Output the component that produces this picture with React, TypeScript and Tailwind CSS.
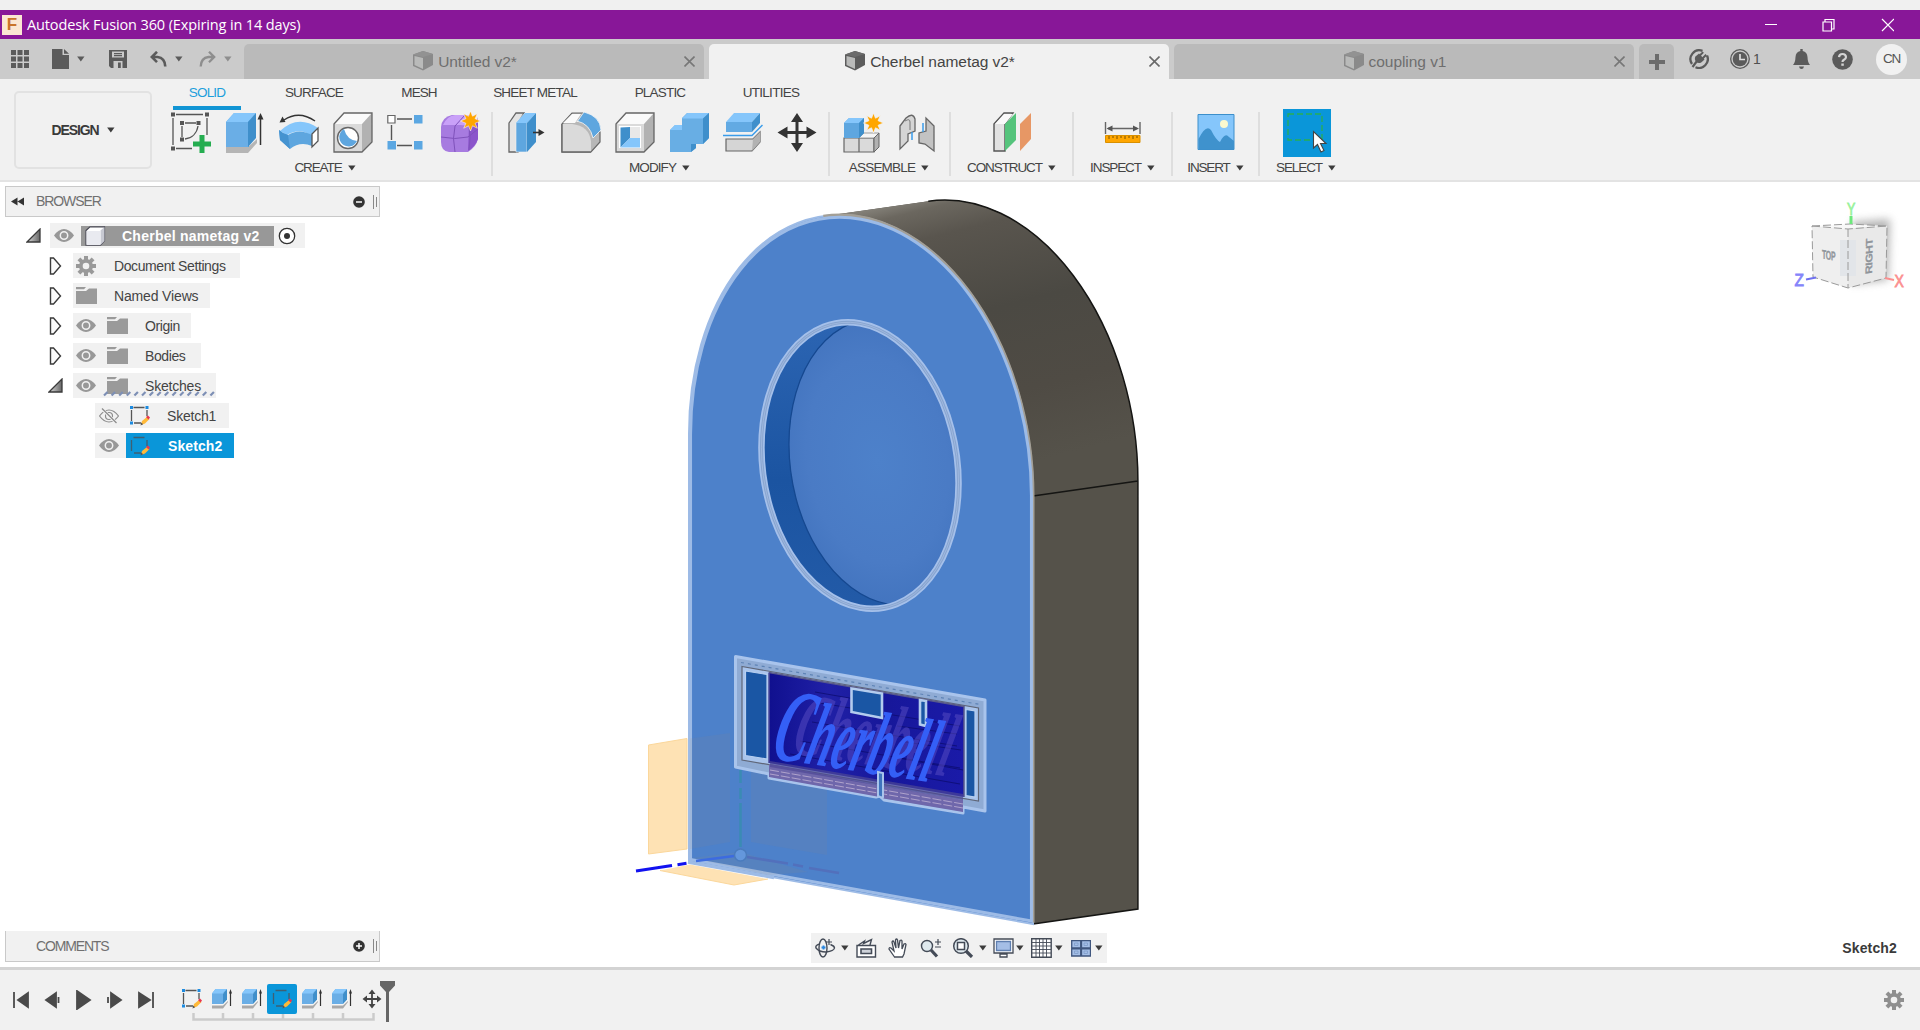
import type { ReactNode } from "react";

const Caret = ({ className = "text-[#3c3c3c]" }: { className?: string }) => (
  <svg className={"shrink-0 " + className} width="8" height="6" viewBox="0 0 9 7">
    <path d="M0 .5h8.6L4.3 6.500z" fill="currentColor" />
  </svg>
);

const Icon = ({ children }: { children: ReactNode }) => (
  <svg className="block shrink-0" width="40" height="42" viewBox="0 0 40 42">
    {children}
  </svg>
);

const star =
  "M0-10 2-4.8 6.8-7.2 4.6-2.3 10 0 4.6 2.3 6.8 7.2 2 4.8 0 10-2 4.8-6.8 7.2-4.6 2.3-10 0-4.6-2.3-6.8-7.2-2-4.8z";

/* ---------- create tools ---------- */
const SketchIcon = () => (
  <Icon>
    <g stroke="#555" strokeWidth="1.3" fill="none">
      <path d="M5 2.500h27M2 6v27M36 6v17M5 36.500h16" />
      <path d="M14 11h11M11 14v11M27 14c-1 7-6 12-13 13" />
    </g>
    <path
      d="M0 .5h4v4H0zM34 .5h4v4h-4zM0 34.500h4v4H0zM9 9h4v4H9zM25.500 9h4v4h-4zM9 25.500h4v4H9z"
      fill="#555"
    />
    <path d="M28.500 23h5v6.500H40v5h-6.500V41h-5v-6.500H22v-5h6.500z" fill="#25ad50" />
  </Icon>
);
const ExtrudeIcon = () => (
  <Icon>
    <path d="M1 35h22l9-8v4l-9 10H1z" fill="#b5b5b5" />
    <path d="M1 10 9 1h22l-7 9v25H1z" fill="#6aaee6" />
    <path d="M1 10 9 1h22l-8 9z" fill="#85c6fb" />
    <path d="m23 10 8-9v25l-8 9z" fill="#3f8fcb" />
    <path d="M35.500 4v29" stroke="#333" strokeWidth="1.5" />
    <path d="m35.500 1 3 6.500h-6z" fill="#333" />
  </Icon>
);
const RevolveIcon = () => (
  <Icon>
    <path d="M1 19q18-17 38-3l-6 8q-12-9-25-1z" fill="#85c6fb" />
    <path d="M0 18q4 4 9 5 11-7 24 0v11q-12-5-22 3L1 28z" fill="#5ea6df" />
    <path d="M0 18q4 4 9 5l2 14L1 28z" fill="#4593d0" />
    <path d="m33 22 6-6v13l-6 6z" fill="#fff" stroke="#555" strokeWidth="1.3" />
    <path d="M5 8Q20-2 36 9" fill="none" stroke="#333" strokeWidth="1.5" />
    <path d="m.5 10.500 3-6 3 5.500z" fill="#333" />
  </Icon>
);
const HoleIcon = () => (
  <Icon>
    <path d="M1 12 11 1h28L29 12z" fill="#fafafa" />
    <path d="M1 12h28v28H1z" fill="#dadada" />
    <path d="M29 12 39 1v29L29 40z" fill="#b2b2b2" />
    <path d="M1 12 11 1h28v29L29 40H1z" fill="none" stroke="#666" strokeWidth="1.3" />
    <circle cx="15" cy="26" r="10.500" fill="#fff" stroke="#666" strokeWidth="1.4" />
    <path d="M11 17q3 11 13 12a9.300 9.300 0 1 1-13-12z" fill="#5ea6df" />
  </Icon>
);
const PatternIcon = () => (
  <Icon>
    <path d="M10 7h15M4.500 13v15M10 33.500h15" stroke="#555" strokeWidth="1.4" />
    <path d="M.8 3.500H8v7.500H.8z" fill="#fff" stroke="#666" strokeWidth="1.2" />
    <path d="M27 3h8.500v8.500H27zM27 29h8.500v8.500H27zM.5 29H9v8.500H.5z" fill="#5ba7e2" />
  </Icon>
);
const FormIcon = () => (
  <Icon>
    <path d="M0 15Q1 5 11 3h15q11 2 11 12v12q-2 8-10 13H8q-8-1-8-10z" fill="#a77be0" />
    <path d="M2 13Q6 4 14 3h14q6 3 0 8-3 3-8 2z" fill="#c9a1f8" />
    <path d="M28 13q9-3 9-8v22q-3 8-10 12z" fill="#8b55cb" />
    <path d="M0 25q14 3 27 0l10-8M14 40q-3-14 0-26l10-11M28 38q2-12 0-25" fill="none" stroke="#7f52bb" strokeWidth="1" />
    <path transform="translate(29.500 9)" d={star} fill="#ffa600" stroke="#f6f0ff" strokeWidth=".6" />
  </Icon>
);

/* ---------- modify tools ---------- */
const PressPullIcon = () => (
  <Icon>
    <path d="M2 11 9 1h8L11 11v29H2z" fill="#e4e4e4" stroke="#666" strokeWidth="1.3" />
    <path d="m9 11 9-10h10l-8 10v29H9z" fill="#5ea6df" stroke="#f1f1f1" strokeWidth=".6" />
    <path d="m9 11 9-10h11l-9 10z" fill="#85c6fb" />
    <path d="m20 11 9-10v29l-9 10z" fill="#3f8fcb" />
    <path d="M26 20.500h8" stroke="#333" strokeWidth="1.6" />
    <path d="m31.500 17 6 3.500-6 3.500z" fill="#333" />
  </Icon>
);
const FilletIcon = () => (
  <Icon>
    <path d="M1 12 11 1h11l17 19v10L30 40H1z" fill="#b7b7b7" stroke="#666" strokeWidth="1.2" />
    <path d="M1 12h10q17 2 19 17v11H1z" fill="#dadada" />
    <path d="M2 11 11 2h9l-6 9z" fill="#fafafa" />
    <path d="m16 10 7-10q16 4 17 18l-8 8Q29 12 16 9z" fill="#5ea6df" stroke="#f6f6f6" strokeWidth=".8" />
    <path d="M1 12v28h29" fill="none" stroke="#666" strokeWidth="1.4" />
  </Icon>
);
const ShellIcon = () => (
  <Icon>
    <path d="M1 12 11 1h28L29 12z" fill="#fafafa" />
    <path d="M1 12h28v28H1z" fill="#dadada" />
    <path d="M29 12 39 1v29L29 40z" fill="#b2b2b2" />
    <path d="M1 12 11 1h28v29L29 40H1z" fill="none" stroke="#666" strokeWidth="1.3" />
    <path d="M4 14h22v22H4z" fill="#fff" />
    <path d="M5.500 15.500 15 15v11l-9.500 9.500z" fill="#3f8fcb" />
    <path d="M15 15h10v11H15z" fill="#e8e8e8" />
    <path d="m5.500 35.500 9.500-9.500h10v9.500z" fill="#85c6fb" />
  </Icon>
);
const CombineIcon = () => (
  <Icon>
    <path d="M1 18 6 13h7V6l5-5h22v25l-6 6h-7v4l-5 4H1z" fill="#68aee4" />
    <path d="M13 6.500 18.500 1H40l-6 5.500z" fill="#85c6fb" />
    <path d="M34 6.500 40 1v25l-6 6zM22 40V32l5 0v4z" fill="#3f8fcb" />
    <path d="M1 18 6 13h7v5z" fill="#85c6fb" />
  </Icon>
);
const SplitIcon = () => (
  <Icon>
    <path d="M3 10 11 1h26l-8 9z" fill="#85c6fb" />
    <path d="M3 10h26v10H3z" fill="#62aae3" />
    <path d="m29 10 8-9v10l-8 9z" fill="#3f8fcb" />
    <path d="M0 23.500h29L39.500 13" fill="none" stroke="#3a9cea" strokeWidth="1.5" />
    <path d="M3 27h27l7-7v10l-8 9H3z" fill="#d5d5d5" stroke="#666" strokeWidth="1.2" />
    <path d="m30 27 7-7v10l-8 9z" fill="#b2b2b2" />
  </Icon>
);
const MoveIcon = () => (
  <Icon>
    <path d="M20 7v28M6 20.500h28" stroke="#333" strokeWidth="3" />
    <path d="m20 1 6 9H14zM20 40l6-9H14zM.5 20.500l10-6v12zM39.500 20.500l-10-6v12z" fill="#333" />
  </Icon>
);

/* ---------- remaining ribbon tools ---------- */
const NewComponentIcon = () => (
  <Icon>
    <path d="M1 26h15v14H1zM16 26h15v14H16z" fill="#dadada" stroke="#666" strokeWidth="1.2" />
    <path d="m16 26 5-5h15l-5 5z" fill="#f5f5f5" stroke="#888" strokeWidth=".8" />
    <path d="m31 26 5-5v14l-5 5z" fill="#b2b2b2" stroke="#666" strokeWidth="1" />
    <path d="M1 11 6 6h15v15l-5 5H1z" fill="#5ea6df" />
    <path d="M1 11 6 6h15l-5 5z" fill="#85c6fb" />
    <path d="m16 11 5-5v15l-5 5z" fill="#3f8fcb" />
    <path transform="translate(30.500 11)" d={star} fill="#ffa600" stroke="#f1f1f1" strokeWidth=".8" />
  </Icon>
);
const JointIcon = () => (
  <Icon>
    <path d="M3 14 9 6q7-6 9 1v12l-7 3v7l-8 8z" fill="#d5d5d5" stroke="#666" strokeWidth="1.3" />
    <path d="M37 14 29 6v13l-7 2v10l6 1 9 7z" fill="#c3c3c3" stroke="#666" strokeWidth="1.3" />
    <path d="M15 20v8M26 11v9" stroke="#3a9cea" strokeWidth="1.5" />
    <path d="M8 9q5-3 5 1M13 10v8" fill="none" stroke="#777" />
  </Icon>
);
const ConstructIcon = () => (
  <Icon>
    <path d="M2 12 12 1h9l-8 11v27H2z" fill="#e2e2e2" stroke="#555" strokeWidth="1.4" />
    <path d="M3 12 12 2h9l-8 10z" fill="#fafafa" />
    <path d="M13 12 24 1v27L13 39z" fill="#55c47c" />
    <path d="M28 12 39 1v26L28 39z" fill="#e79765" />
  </Icon>
);
const InspectIcon = () => (
  <Icon>
    <path d="M2.500 10v12M37 10v12M5 16.500h29" stroke="#666" strokeWidth="1.4" />
    <path d="m3.500 16.500 6-3v6zM36 16.500l-6-3v6z" fill="#555" />
    <path d="M2.500 23.500h34.500v7H2.500z" fill="#ffa600" stroke="#d99000" />
    <path d="M6 24v3M10 24v2M14 24v3M18 24v2M22 24v3M26 24v2M30 24v3M34 24v2" stroke="#7a5300" />
  </Icon>
);
const InsertIcon = () => (
  <Icon>
    <path d="M2 2.500h36v35H2z" fill="#85c6fb" stroke="#3c8fcb" />
    <path d="M2.500 27Q10 12 15 18q5 10 9 12 5-10 9-5l5 4v8.500H2.500z" fill="#3f92cd" />
    <circle cx="28" cy="12" r="4" fill="#fbf9cf" />
  </Icon>
);
const SelectIcon = () => (
  <svg className="-mt-[3px] block shrink-0 bg-[#0a96d9]" width="48" height="48" viewBox="0 0 48 48">
    <path d="M5 5h34v26H5z" fill="none" stroke="#2aae52" strokeWidth="1.3" strokeDasharray="6 3" />
    <path d="M30.500 22.500v16.500l4-3.500 3.500 7.500 3-1.500-3.500-7h5.500z" fill="#fff" stroke="#444" strokeWidth="1.1" />
  </svg>
);

type Group = { label: string; box: string; track: string; icons: ReactNode[]; pad?: string };
const groups: Group[] = [
  {
    label: "CREATE",
    box: "w-[334px]",
    track: "tracking-[-1.1px]",
    icons: [<SketchIcon />, <ExtrudeIcon />, <RevolveIcon />, <HoleIcon />, <PatternIcon />, <FormIcon />],
  },
  {
    label: "MODIFY",
    box: "w-[337px]",
    track: "tracking-[-0.9px]",
    pad: "pr-[2px]",
    icons: [<PressPullIcon />, <FilletIcon />, <ShellIcon />, <CombineIcon />, <SplitIcon />, <MoveIcon />],
  },
  { label: "ASSEMBLE", box: "w-[121px]", track: "tracking-[-0.8px]", pad: "pr-[1px]", icons: [<NewComponentIcon />, <JointIcon />] },
  { label: "CONSTRUCT", box: "w-[123px]", track: "tracking-[-1.1px]", icons: [<ConstructIcon />] },
  { label: "INSPECT", box: "w-[99px]", track: "tracking-[-1.1px]", icons: [<InspectIcon />] },
  { label: "INSERT", box: "w-[87px]", track: "tracking-[-1.15px]", icons: [<InsertIcon />] },
  { label: "SELECT", box: "w-[92px]", track: "tracking-[-1.1px]", icons: [<SelectIcon />] },
];

const ribbonTabs = [
  ["SOLID", "w-[68px] tracking-[-0.8px]"],
  ["SURFACE", "w-[90px] tracking-[-0.8px]"],
  ["MESH", "w-[64px] tracking-[-0.9px]"],
  ["SHEET METAL", "w-[112px] tracking-[-0.8px]"],
  ["PLASTIC", "w-[82px] tracking-[-0.8px]"],
  ["UTILITIES", "w-[84px] tracking-[-0.7px]"],
];

const DocCube = ({ dim }: { dim?: boolean }) => (
  <svg className={dim ? "opacity-50" : ""} width="20" height="20" viewBox="0 0 20 20">
    <path d="M0 3.500 10 0l10 3v11l-10 5.500L0 15z" fill="#5c5c5c" />
    <path d="M1.500 5 10 7v11L1.500 14z" fill="#b9bab9" />
    <path d="M0 3.500 10 0l10 3-10 3z" fill="#6b6b6b" />
  </svg>
);

const DocTab = ({ title, active }: { title: string; active?: boolean }) => (
  <div
    className={
      "flex h-[35px] w-[460px] items-center rounded-t-[5px] text-[15.500px] " +
      (active ? "bg-[#f1f1f1] text-[#444]" : "bg-[#bababa] text-[#6e6e6e]")
    }
  >
    <div className="flex flex-1 items-center justify-center gap-[5px] pb-px pl-[2px]">
      <DocCube dim={!active} />
      <span className="pt-[2px] tracking-[-0.05px]">{title}</span>
    </div>
    <svg className="mr-[9px]" width="11" height="11" viewBox="0 0 11 11">
      <path d="m.5.5 10 10M10.500.5l-10 10" stroke={active ? "#6a6a6a" : "#777"} strokeWidth="1.6" />
    </svg>
  </div>
);

/* ---------- browser tree ---------- */
const Eye = () => (
  <svg className="block shrink-0" width="20" height="13" viewBox="0 0 20 13">
    <path d="M0 6.500Q4.500 0 10 0t10 6.500Q15.500 13 10 13T0 6.500z" fill="#989898" />
    <circle cx="10" cy="6.500" r="3.700" fill="none" stroke="#f1f1f1" strokeWidth="1.5" />
  </svg>
);
const EyeOff = () => (
  <svg className="block shrink-0" width="20" height="16" viewBox="0 0 20 16">
    <g fill="none" stroke="#8c8c8c" strokeWidth="1.2">
      <path d="M.5 8Q5 2 10 2t9.500 6Q15 14 10 14T.5 8z" />
      <circle cx="10" cy="8" r="3.500" />
      <path d="m3 1 14.500 14" stroke="#f1f1f1" strokeWidth="3" />
      <path d="m3 .5 14.500 14.500" />
    </g>
  </svg>
);
const Folder = () => (
  <svg className="block shrink-0" width="21" height="17" viewBox="0 0 21 17">
    <path d="M0 0h10l-2 2.200H0zM0 4h10l3-2.500h8V17H0z" fill="#9a9a9a" />
  </svg>
);
const Gear = ({ color = "#999" }: { color?: string }) => (
  <svg className="block shrink-0" width="20" height="20" viewBox="-10 -10 20 20">
    <g fill={color}>
      {[0, 45, 90, 135].map((a) => (
        <rect key={a} x="-2" y="-10" width="4" height="20" transform={`rotate(${a})`} />
      ))}
      <circle r="7" />
    </g>
    <circle r="3.300" fill="#f1f1f1" />
  </svg>
);
const SketchSmall = ({ on }: { on?: boolean }) => (
  <svg className="block shrink-0" width="20" height="20" viewBox="0 0 20 20">
    <path d="M3.500 1.500h11M1.500 4v11M17 4v6M4 17h7" stroke={on ? "#3f5f72" : "#555"} strokeWidth="1.300" />
    {!on && <path d="M0 0h3v3H0zM15.500 0h3v3h-3zM0 15.500h3v3H0z" fill="#1d8be0" />}
    <path d="m11 19 1-4 5-4 2.500 2-4.500 4.500z" fill="#ffb938" />
    <path d="m16 11 2-1.500 2 2-1.500 2z" fill="#e8384f" />
    <path d="m10.500 19.500.7-3 2 1.800z" fill="#555" />
  </svg>
);
const TriClosed = () => (
  <svg className="block shrink-0" width="13" height="18" viewBox="0 0 13 18">
    <path d="M1.500 1h3l7 8-7 8h-3z" fill="#fafafa" stroke="#3a3a3a" strokeWidth="1.400" />
  </svg>
);
const TriOpen = ({ className = "" }: { className?: string }) => (
  <svg className={"block shrink-0 " + className} width="15" height="15" viewBox="0 0 15 15">
    <defs>
      <linearGradient id="tri" x1="0" x2="1">
        <stop offset="0" stopColor="#ddd" />
        <stop offset="1" stopColor="#666" />
      </linearGradient>
    </defs>
    <path d="M14 1v13H1z" fill="url(#tri)" stroke="#3a3a3a" strokeWidth="1.300" />
  </svg>
);

const Row = ({ open, box, children }: { open?: boolean; box: string; children: ReactNode }) => (
  <div className="flex h-[25px] items-center pl-[49px]">
    <div className="w-[24px]">{open ? <TriOpen className="-ml-[1px]" /> : <TriClosed />}</div>
    <div className={"flex h-[25px] items-center gap-[11px] bg-[#f1f1f1] pl-[3px] " + box}>{children}</div>
  </div>
);

const PanelBar = ({ title, plus }: { title: string; plus?: boolean }) => (
  <div
    className={
      "ml-[5px] flex h-[31px] w-[375px] items-center border border-[#c9c9c9] bg-[#f1f1f1] pr-[2px] " +
      (plus ? "border-t-0" : "")
    }
  >
    <div className="w-[30px] pl-[5px]">
      {!plus && (
        <svg width="14" height="9" viewBox="0 0 14 9">
          <path d="M6.500.500v8L0 4.500zM13 .500v8L6.500 4.500z" fill="#333" />
        </svg>
      )}
    </div>
    <span className={"flex-1 text-[14px] text-[#707070] " + (plus ? "tracking-[-1.15px]" : "tracking-[-1.1px]")}>{title}</span>
    <svg width="12" height="12" viewBox="0 0 12 12">
      <circle cx="6" cy="6" r="5.800" fill="#333" />
      <path d={plus ? "M3 6h6M6 3v6" : "M3 6h6"} stroke="#fff" strokeWidth="1.500" />
    </svg>
    <div className="ml-[8px] h-[14px] w-px bg-[#888]" />
    <div className="ml-[2px] h-[10px] w-px bg-[#888]" />
  </div>
);

/* ---------- 3D scene ---------- */
const Scene = () => (
  <svg className="absolute inset-0" width="1920" height="785" viewBox="0 182 1920 785">
    <defs>
      <linearGradient id="side" gradientUnits="userSpaceOnUse" x1="890" y1="200" x2="960" y2="480">
        <stop offset="0" stopColor="#8b8880" />
        <stop offset=".06" stopColor="#6b675f" />
        <stop offset=".16" stopColor="#59554e" />
        <stop offset=".45" stopColor="#4b4943" />
        <stop offset=".75" stopColor="#4f4b44" />
        <stop offset="1" stopColor="#55524a" />
      </linearGradient>
      <radialGradient id="floor" cx=".45" cy=".5" r=".6">
        <stop offset="0" stopColor="#4d81ca" />
        <stop offset=".6" stopColor="#4a7bc5" />
        <stop offset="1" stopColor="#3e70bb" />
      </radialGradient>
      <linearGradient id="wall" x1="0" y1="0" x2="0" y2="1">
        <stop offset="0" stopColor="#2d66b4" />
        <stop offset=".55" stopColor="#1b54a1" />
        <stop offset="1" stopColor="#235ba8" />
      </linearGradient>
      <linearGradient id="navy" x1="0" y1="0" x2="1" y2="0">
        <stop offset="0" stopColor="#10108f" />
        <stop offset=".3" stopColor="#2020a6" />
        <stop offset=".6" stopColor="#17179a" />
        <stop offset="1" stopColor="#1a1aa8" />
      </linearGradient>
      <clipPath id="pocket">
        <circle r=".573" transform="matrix(172 31 0 248 860 465.500)" />
      </clipPath>
      <clipPath id="arch">
        <path
          transform="matrix(172 31 0 248 861 465)"
          d="M-.219-.976 .391-1.1128A1 1 0 0 1 1.610-.1368L1 0A1 1 0 0 0-.219-.976z"
        />
      </clipPath>
      <clipPath id="plate">
        <path d="M769 672 964 706V808L769 774z" />
      </clipPath>
      <filter id="shade" x="-30%" y="-30%" width="160%" height="160%">
        <feGaussianBlur stdDeviation="4" />
      </filter>
    </defs>

    {/* extruded side */}
    <path
      transform="matrix(172 31 0 248 861 465)"
      d="M-.219-.976 .391-1.1128A1 1 0 0 1 1.610-.1368V1.589L1 1.726V0A1 1 0 0 0-.219-.976z"
      fill="#55524a"
    />
    <g clipPath="url(#arch)">
      <rect x="820" y="195" width="320" height="302" fill="url(#side)" />
    </g>
    <path
      transform="matrix(172 31 0 248 861 465)"
      vectorEffect="non-scaling-stroke"
      strokeWidth="1.500"
      fill="none"
      stroke="#151513"
      d="M.391-1.1128A1 1 0 0 1 1.610-.1368V1.589L1 1.726M1 0 1.610-.1368"
    />

    {/* front face */}
    <g transform="matrix(172 31 0 248 861 465)">
      <path
        vectorEffect="non-scaling-stroke"
        d="M-1 1.726V0A1 1 0 0 1 1 0V1.726z"
        fill="#4d81ca"
        stroke="#9dbbe6"
        strokeWidth="2"
      />
      <path
        vectorEffect="non-scaling-stroke"
        d="M-.219-.976A1 1 0 0 1 1 0V1.720"
        fill="none"
        stroke="#a39f96"
        strokeWidth="3"
      />
      <path
        vectorEffect="non-scaling-stroke"
        d="M-.991 1.715V0A.991 .991 0 0 1 .991 0V1.715z"
        fill="none"
        stroke="#9dbbe6"
        strokeWidth="3"
      />
    </g>

    {/* circular pocket */}
    <g clipPath="url(#pocket)">
      <rect x="755" y="310" width="215" height="310" fill="url(#wall)" />
      <circle
        r=".573"
        transform="matrix(172 31 0 248 887.500 462)"
        fill="url(#floor)"
        stroke="#154890"
        strokeWidth="1.300"
        vectorEffect="non-scaling-stroke"
      />
    </g>
    <g transform="matrix(172 31 0 248 860 465.500)" fill="none">
      <circle r=".573" vectorEffect="non-scaling-stroke" stroke="#a5c0ea" strokeWidth="6.500" />
      <circle r=".573" vectorEffect="non-scaling-stroke" stroke="#88a5d0" strokeWidth="3" />
      <circle r=".573" vectorEffect="non-scaling-stroke" stroke="#a5bde2" strokeWidth=".8" />
    </g>

    {/* origin planes and axes */}
    <path d="M648.500 745 687 738.500V849l-38.500 5z" fill="#fee2b4" stroke="#fbd79b" />
    <path d="m660 870.500 30-6 78 14.500-34 6z" fill="#fee2b4" />
    <path d="m660 870.500 74 14.500 34-6" fill="none" stroke="#fbd79b" />
    <path d="m688 862 86 15.500" stroke="#9dbbe6" strokeWidth="3.500" />
    <path d="M690 738.500 730 733v109l-40 7zM751 734l76 13v108l-76-13z" fill="#a08a72" opacity=".1" />
    <path d="m692 858 48-6 68 20-40 3z" fill="#a08a72" opacity=".12" />
    <path d="M740.500 770v13M740.500 788v11M740.500 803v44" stroke="#3a8bb4" strokeWidth="2.500" />
    <path d="m747 857 41 6.500M793 864.500l10 2M809 868l30 5" stroke="#5270bc" strokeWidth="2.500" />
    <path d="m696 861 38-5" stroke="#3c6be0" strokeWidth="2.500" />
    <path d="m636 871 36-5.500M677.500 864.700l9-1.400" stroke="#1212f0" strokeWidth="3" />
    <circle cx="740.500" cy="855" r="6" fill="#6497dc" stroke="#4a7bbd" strokeWidth="1.500" />

    {/* name plate */}
    <path
      d="M735.500 656.500 985 700V811L963 807V813L884 800 880 796 876 797 769 778V774L735.500 767z"
      fill="#8fabd4"
      stroke="#a9c4ec"
      strokeWidth="3"
      strokeLinejoin="round"
    />
    <path d="M741 662.500 980 704.500" stroke="#5e83b5" strokeDasharray="3 4" strokeWidth="1.200" />
    <path d="M742 666.500 978.500 708V801L742 760z" fill="#a9c4ec" stroke="#5f6678" strokeWidth="1.200" />
    <path d="M745.500 671 767 674.500V759L745.500 755.500zM966 709.500l9 1.500v86l-9-1.500z" fill="#1a56a4" stroke="#b7cff0" strokeWidth="1.200" />
    <path d="M769 764 877 785V796.500L769 777zM883.500 786 963 800V812L883.500 798.500z" fill="#6f67ab" />
    <path d="M769 672.500 964 706.500V797L769 763z" fill="url(#navy)" />
    <path d="M769 672.500 964 706.500V797" fill="none" stroke="#595a8a" strokeWidth="1.500" />
    <path d="M769 672.500V763" stroke="#4a4a9a" strokeWidth="1.500" />
    <path
      d="M815 692l40 7M820 703l140 23M812 722l145 24M800 741l160 27M905 742l56 8M893 757l70 13M790 754l170 30M897 726l60 8"
      stroke="#0d0d70"
      strokeWidth="1"
      fill="none"
      opacity=".8"
    />
    <path d="M851.500 688.500 882 693.500V718L851.500 712z" fill="#1a56a4" stroke="#b3ccee" strokeWidth="2.600" />
    <path d="M920 700 926 701V726L920 724.500z" fill="#1a56a4" stroke="#b3ccee" strokeWidth="2.600" />
    <g clipPath="url(#plate)">
      <g fontFamily="Liberation Serif" fontStyle="italic" fontWeight="700" fontSize="88">
        <text transform="matrix(1 .15 -.28 1 790 753)" textLength="156" lengthAdjust="spacingAndGlyphs" fill="#5a4fc4" opacity=".5">
          Cherbell
        </text>
        <text transform="matrix(1 .15 -.28 1 769 758)" textLength="160" lengthAdjust="spacingAndGlyphs" fill="#345ff6">
          <tspan fontSize="102">C</tspan>herbell
        </text>
      </g>
    </g>
    <path d="M770 761 963 794V800L770 767z" fill="#4d4795" opacity=".7" />
    <path d="M770 770 963 804M770 774 963 808" stroke="#b7a9cf" strokeWidth=".9" strokeDasharray="9 2" fill="none" />
    <path d="M878 772v24l3 1.500 2-.5V773z" fill="#3f74bd" stroke="#a9c4ec" strokeWidth="2" />

    {/* view cube */}
    <path d="M1852 222 1890 219 1888 280 1852 284z" fill="#777" opacity=".55" filter="url(#shade)" />
    <path d="M1812 226 1850 224 1887 226 1848 229z" fill="#f8f8f8" />
    <path d="M1812 226 1848 229V288L1813 277z" fill="#efefef" />
    <path d="M1848 229 1887 226 1886 278 1848 288z" fill="#e9e9e9" />
    <path d="M1840 240h16v36h-16z" fill="#e2e5e9" />
    <path
      d="M1812 226 1848 229 1887 226 1886 278 1848 288 1813 277zM1848 229v59M1812 226l38-2 37 2"
      fill="none"
      stroke="#9a9a9a"
      strokeWidth="1"
      strokeDasharray="8 3"
    />
    <g fontFamily="Liberation Sans" fontWeight="700" fill="#90959b" stroke="#90959b" strokeWidth=".3">
      <text transform="matrix(.6 .1 0 1.100 1822 258.500)" fontSize="11.500">TOP</text>
      <text transform="matrix(.02 -1 .8 -.1 1872 273.500)" fontSize="12">RIGHT</text>
    </g>
    <path d="M1851 216v8" stroke="#6de87c" strokeWidth="3" />
    <path d="m1806 279.500 10-2" stroke="#6f70f0" strokeWidth="2" />
    <path d="m1885 278 9 2" stroke="#fb8f8f" strokeWidth="2" />
    <g fontFamily="Liberation Sans" fontSize="16" textAnchor="middle" strokeWidth=".8">
      <text x="1851" y="214.500" fill="#98f29b" stroke="#98f29b" textLength="8" lengthAdjust="spacingAndGlyphs">Y</text>
      <text x="1799" y="286" fill="#8585fa" stroke="#8585fa" textLength="9" lengthAdjust="spacingAndGlyphs">Z</text>
      <text x="1899" y="287" fill="#fb9090" stroke="#fb9090" textLength="9" lengthAdjust="spacingAndGlyphs">X</text>
    </g>
  </svg>
);

/* ---------- navigation bar under the model ---------- */
const NavBar = () => (
  <div className="flex h-[30px] w-[296px] items-center bg-[#f1f1f1] pl-[4px] text-[#444b57]">
    <svg width="21" height="20" viewBox="0 0 21 20" fill="none" stroke="currentColor" strokeWidth="1.400">
      <ellipse cx="8" cy="10" rx="4" ry="9" />
      <path d="M5 6Q0 7 1 10q3 4 10 4 8-1 8.500-4 0-2-4-3.500" />
      <path d="M11 4h6M14 1v6" strokeWidth="1.200" />
      <path d="M6.500 9.500h4M8.500 7.500v4" stroke="#2b87df" strokeWidth="1.800" />
    </svg>
    <Caret className="ml-[5px] text-[#3c3c3c]" />
    <svg className="ml-[7px]" width="21" height="20" viewBox="0 0 21 20" fill="#fff" stroke="currentColor" strokeWidth="1.400">
      <path d="M1 7.500h18.500V19H1z" />
      <path d="m2.500 7 6-4-1 2.500 8-4-1.500 5.500" fill="none" />
      <path d="M5 11h10.500v4.500H5z" fill="#cfd3da" strokeWidth="1.600" />
    </svg>
    <svg className="ml-[11px]" width="21" height="20" viewBox="0 0 21 20" fill="#fff" stroke="currentColor" strokeWidth="1.300">
      <path d="M6.500 19 1 11q0-2 2-1l3 3-2-9q1-2 2 0l2 6-.500-8q1-2 2 0l1 8 1.500-7.500q1.500-1 2 .500L14 11l2-5q1.500-1 2 .500L16 16l-1.500 3z" />
    </svg>
    <svg className="ml-[11px]" width="22" height="20" viewBox="0 0 22 20" fill="none" stroke="currentColor" strokeWidth="1.400">
      <circle cx="7" cy="8" r="5.500" fill="#dfe9ee" />
      <path d="m11 12 6 6.500" strokeWidth="3.200" />
      <path d="M15 4h6M18 1v6M15 9h6" strokeWidth="1.200" />
    </svg>
    <svg className="ml-[10px]" width="22" height="20" viewBox="0 0 22 20" fill="none" stroke="currentColor" strokeWidth="1.500">
      <circle cx="9" cy="8" r="7.300" fill="#dfe9ee" />
      <path d="M5.500 4.500h7v7h-7z" fill="#fff" />
      <path d="m14 13 6 6" strokeWidth="3.200" />
    </svg>
    <Caret className="ml-[5px] text-[#3c3c3c]" />
    <svg className="ml-[6px]" width="21" height="20" viewBox="0 0 21 20" fill="#fff" stroke="currentColor" strokeWidth="1.300">
      <path d="M1 1h19v14H1zM7 16h7v3H7z" />
      <path d="M3.500 3.500h14v9h-14z" fill="#a4bee6" stroke="#5f7fb0" />
    </svg>
    <Caret className="ml-[2px] text-[#3c3c3c]" />
    <svg className="ml-[7px]" width="21" height="20" viewBox="0 0 21 20" fill="#fff" stroke="currentColor">
      <path d="M.7.700h19.500v18.500H.7z" strokeWidth="1.400" />
      <path d="M1 4.500h19M1 8h19M1 11.500h19M1 15h19M5 1v18M8.500 1v18M12 1v18M15.500 1v18" strokeWidth=".9" />
    </svg>
    <Caret className="ml-[3px] text-[#3c3c3c]" />
    <svg className="ml-[8px]" width="20" height="17" viewBox="0 0 20 17" fill="#a4bee6" stroke="#3f567e" strokeWidth="1.300">
      <path d="M.7.700h9v7.300h-9zM10.500.700h9v7.300h-9zM.7 8.800h9V16h-9zM10.500 8.800h9V16h-9z" />
      <path d="M3.500 3h3.500v2.500H3.500zM13 3h3.500v2.500H13zM3.500 11h3.500v2.500H3.500zM13 11h3.500v2.500H13z" fill="none" stroke="#7f9cc9" strokeWidth=".8" />
    </svg>
    <Caret className="ml-[4px] text-[#3c3c3c]" />
  </div>
);

const ExtrudeSmall = () => (
  <svg className="block" width="20" height="20" viewBox="0 0 20 20">
    <path d="M0 15h11l5-5v3l-5 6.500H0z" fill="#a9a9a9" />
    <path d="M0 14h11l5-5v3l-5 4.500H0z" fill="#f5f5f5" />
    <path d="M0 4.500 3.500 0H15l-4 4.500V15H0z" fill="#6aaee6" />
    <path d="M0 4.500 3.500 0H15l-4 4.500z" fill="#85c6fb" />
    <path d="M11 4.500 15 0v10.500L11 15z" fill="#3f8fcb" />
    <path d="M18.500 3v14" stroke="#333" strokeWidth="1.200" />
    <path d="m18.500 0 1.500 4.500h-3z" fill="#333" />
  </svg>
);

const timeline: ReactNode[] = [
  <SketchSmall />,
  <ExtrudeSmall />,
  <ExtrudeSmall />,
  <SketchSmall on />,
  <ExtrudeSmall />,
  <ExtrudeSmall />,
  <svg width="20" height="20" viewBox="0 0 20 20">
    <path d="M10 3v14M3 10h14" stroke="#444" strokeWidth="1.800" />
    <path d="m10 .500 3.500 4.500h-7zM10 19.500l3.500-4.500h-7zM.5 10 5 6.500v7zM19.500 10 15 6.500v7z" fill="#444" />
  </svg>,
];

const playback = ["M2 2v16M16 3v14L6 10z", "M3 10 13 3v14zM15.500 7v6", "M3 1v18l13-9z", "M16 10 6 3v14zM3 7v6", "M3 3v14l11-7zM17 2v16"];

export default function App() {
  return (
    <div className="flex h-[1030px] w-[1920px] flex-col overflow-hidden bg-white font-['Liberation_Sans',sans-serif] text-[#444]">
      <div className="h-[10px] shrink-0 bg-[#f0f0f0]" />

      <header className="flex h-[29px] shrink-0 items-center bg-[#881798] pl-[2px] text-white">
        <div className="flex h-[20px] w-[20px] items-center justify-center bg-[#fbe6d3] text-[17px] font-bold text-[#c9732a]">F</div>
        <span className="ml-[5px] font-['Open_Sans',sans-serif] text-[14.500px] tracking-[-0.13px]">
          Autodesk Fusion 360 (Expiring in 14 days)
        </span>
        <svg className="ml-auto mr-[26px]" width="130" height="14" viewBox="0 0 130 14" fill="none" stroke="#fff" strokeWidth="1.200">
          <path d="M1 6.500h12M118 1l12 12M130 1l-12 12" />
          <path d="M59 4h8.500v9H59zM61 4V1.500h9V11h-2.500" />
        </svg>
      </header>

      <div className="flex h-[40px] shrink-0 items-end bg-[#cbcbcb]">
        <div className="flex h-[40px] w-[244px] shrink-0 items-center pl-[11px] text-[#5b5b5b]">
          <svg width="18" height="18" viewBox="0 0 18 18" fill="currentColor">
            <path d="M0 0h5v5H0zM6.500 0h5v5h-5zM13 0h5v5h-5zM0 6.500h5v5H0zM6.500 6.500h5v5h-5zM13 6.500h5v5h-5zM0 13h5v5H0zM6.500 13h5v5h-5zM13 13h5v5h-5z" />
          </svg>
          <svg className="ml-[23px]" width="17" height="20" viewBox="0 0 17 20" fill="currentColor">
            <path d="M0 0h10.500v6H17v14H0zM12 0l5 4.800h-5z" />
          </svg>
          <Caret className="ml-[8px] text-[#5b5b5b]" />
          <svg className="ml-[24px]" width="18" height="18" viewBox="0 0 18 18" fill="currentColor">
            <path d="M0 0h18v18H2l-2-2zM3 1.500v6h12v-6zM4.500 11v7h9v-7z" fillRule="evenodd" />
            <path d="M5 3h8v1.300H5zM5 5h8v1.300H5zM9 12.500h2.800V18H9z" />
          </svg>
          <svg className="ml-[23px]" width="17" height="16" viewBox="0 0 17 16" fill="none" stroke="currentColor" strokeWidth="2.600">
            <path d="M7 .8 1.800 6 7 11.200M2.500 6h5q7.500 1 7.800 9.500" />
          </svg>
          <Caret className="ml-[8px] text-[#5b5b5b]" />
          <svg className="ml-[16px]" width="17" height="16" viewBox="0 0 17 16" fill="none" stroke="#8e8e8e" strokeWidth="2.300">
            <path d="m10 .8 5.200 5.200L10 11.200M14.500 6h-5Q2 7 1.700 15.500" />
          </svg>
          <Caret className="ml-[8px] text-[#8e8e8e]" />
        </div>
        <div className="flex gap-[5px]">
          <DocTab title="Untitled v2*" />
          <DocTab title="Cherbel nametag v2*" active />
          <DocTab title="coupling v1" />
          <div className="flex h-[35px] w-[35px] items-center justify-center rounded-t-[5px] bg-[#bababa]">
            <svg width="16" height="16" viewBox="0 0 16 16">
              <path d="M8 0v16M0 8h16" stroke="#6c6c6c" strokeWidth="4" />
            </svg>
          </div>
        </div>
        <div className="flex h-[40px] items-center pl-[15px] text-[#5b5b5b]">
          <svg width="20" height="20" viewBox="0 0 20 20" fill="none" stroke="currentColor">
            <path d="M13.500 1.900A8.800 8.800 0 0 0 3 15M6.500 18.200A8.800 8.800 0 0 0 18 6.500" strokeWidth="2.300" />
            <path d="M3.500 18 8 12" strokeWidth="2.200" />
            <path d="M6.500 7.500 10 4.500l5.500 6-3 2.700q-3 2-5.300-.5t-.7-5.200z" fill="currentColor" stroke="none" />
            <path d="m10.800 6.500 3.400-3.400M13.500 9.500l3.700-3.700" strokeWidth="2" />
          </svg>
          <svg className="ml-[21px]" width="20" height="20" viewBox="0 0 20 20">
            <circle cx="10" cy="10" r="9.300" fill="none" stroke="currentColor" strokeWidth="1.300" />
            <circle cx="10" cy="10" r="7.300" fill="currentColor" />
            <path d="M10 5v5.500h5" fill="none" stroke="#ddd" strokeWidth="1.700" />
          </svg>
          <span className="ml-[3px] w-[8px] text-[14px] text-[#505050]">1</span>
          <svg className="ml-[32px]" width="17" height="20" viewBox="0 0 17 20" fill="currentColor">
            <path d="M7.300 0h2.400v2q4.500 1 4.800 6 .2 5.500 2.500 8H0q2.300-2.500 2.500-8 .3-5 4.800-6zM6 17.500h5q-.5 2.500-2.500 2.500T6 17.500z" />
          </svg>
          <svg className="ml-[22px]" width="21" height="21" viewBox="0 0 21 21">
            <circle cx="10.500" cy="10.500" r="10.300" fill="currentColor" />
            <path d="M7 8.200q.3-3.200 3.500-3.200T14 8q0 1.700-2 2.800-1.500.8-1.500 2.200" fill="none" stroke="#d4d4d4" strokeWidth="2.200" />
            <path d="M9.300 14.500h2.500v2.300H9.300z" fill="#d4d4d4" />
          </svg>
          <div className="ml-[23px] flex h-[31px] w-[31px] items-center justify-center rounded-full bg-[#f1f1f1] text-[13.500px] tracking-[-1.2px] text-[#555]">
            CN
          </div>
        </div>
      </div>

      <section className="flex h-[103px] shrink-0 border-b-2 border-[#e3e3e3] bg-[#f1f1f1]">
        <div className="ml-[14px] mt-[12px] flex h-[78px] w-[138px] items-center justify-center gap-[8px] rounded-[5px] border-2 border-[#e2e2e2]">
          <span className="text-[14px] font-bold tracking-[-1.1px] text-[#3a3a3a]">DESIGN</span>
          <Caret />
        </div>
        <div className="ml-[6px] flex flex-col">
          <div className="flex h-[31px] gap-[28px] pl-[15px] text-[13.500px]">
            {ribbonTabs.map(([name, cls], i) => (
              <div
                key={name}
                className={
                  "flex h-[31px] items-center justify-center whitespace-nowrap border-b-[4px] pt-px " +
                  (i === 0 ? "border-[#1195d4] text-[#1c9fdc] " : "border-transparent ") +
                  cls
                }
              >
                {name}
              </div>
            ))}
          </div>
          <div className="flex h-[70px] pl-px pt-[2px]">
            {groups.map((g, i) => (
              <div key={g.label} className={"flex h-[64px] " + g.box}>
                <div className="flex flex-1 flex-col items-center">
                  <div className={"flex h-[48px] gap-[14px] " + (i < 2 ? "pl-[2px]" : "pl-px")}>
                    {g.icons.map((icon, k) => (
                      <div key={k} className="w-fit">
                        {icon}
                      </div>
                    ))}
                  </div>
                  <div className={"flex items-center gap-[6px] pt-[2px] " + (g.pad ?? "")}>
                    <span className={"text-[13.500px] leading-4 " + g.track}>{g.label}</span>
                    <Caret />
                  </div>
                </div>
                {i < 6 && <div className="w-[2px] bg-[#dedede]" />}
              </div>
            ))}
          </div>
        </div>
      </section>

      <main className="relative flex h-[785px] shrink-0 text-[14px] tracking-[-0.4px]">
        <Scene />
        <aside className="relative flex w-[400px] flex-col justify-between pb-[5px] pt-[4px]">
          <div>
            <PanelBar title="BROWSER" />
            <div className="flex flex-col gap-[5px] pt-[6px]">
              <div className="flex h-[25px] items-center pl-[26px]">
                <div className="w-[24px]">
                  <TriOpen />
                </div>
                <div className="flex h-[25px] w-[255px] items-center bg-[#f1f1f1] pl-[4px]">
                  <Eye />
                  <div className="ml-[7px] flex h-[20px] w-[193px] items-center bg-[#989898] pl-[4px] font-bold text-white">
                    <svg width="21" height="20" viewBox="0 0 21 20">
                      <path d="M1 4.500 5 .8h14.500v14l-4 4.400H1z" fill="#fff" stroke="#4a4a55" strokeWidth="1.200" />
                      <path d="M15.500 4.500 19.500 1v14l-4 4z" fill="#c7c9d2" />
                      <path d="M1.500 5h14v14h-14z" fill="#e9eaf0" />
                    </svg>
                    <span className="ml-[16px] pt-[2px] tracking-[0.25px]">Cherbel nametag v2</span>
                  </div>
                  <svg className="ml-[4px]" width="18" height="18" viewBox="0 0 18 18">
                    <circle cx="9" cy="9" r="7.700" fill="#fff" stroke="#333" strokeWidth="1.300" />
                    <circle cx="9" cy="9" r="3" fill="#333" />
                  </svg>
                </div>
              </div>
              <Row box="w-[167px]">
                <Gear />
                <span className="ml-[7px] pt-[2px]">Document Settings</span>
              </Row>
              <Row box="w-[137px]">
                <Folder />
                <span className="ml-[6px] pt-[2px] tracking-[-0.15px]">Named Views</span>
              </Row>
              <Row box="w-[118px]">
                <Eye />
                <Folder />
                <span className="ml-[6px] pt-[2px]">Origin</span>
              </Row>
              <Row box="w-[128px]">
                <Eye />
                <Folder />
                <span className="ml-[6px] pt-[2px]">Bodies</span>
              </Row>
              <div className="relative">
                <Row open box="w-[143px]">
                  <Eye />
                  <Folder />
                  <span className="ml-[6px] pt-[2px] tracking-[-0.2px]">Sketches</span>
                </Row>
                <svg className="absolute left-[103px] top-[17px]" width="112" height="7" viewBox="0 0 112 7">
                  {Array.from({ length: 15 }, (_, i) => (
                    <path key={i} d={`M${1 + i * 7.6} 5.500l3.500-3.500`} stroke="#7d8fb5" strokeWidth="2.200" />
                  ))}
                </svg>
              </div>
              <div className="ml-[95px] flex h-[25px] w-[134px] items-center bg-[#f1f1f1] pl-[4px]">
                <EyeOff />
                <div className="ml-[11px]">
                  <SketchSmall />
                </div>
                <span className="ml-[17px] pt-[2px] tracking-[-0.2px]">Sketch1</span>
              </div>
              <div className="ml-[95px] flex h-[25px] w-[139px] items-center bg-[#f1f1f1] pl-[4px]">
                <Eye />
                <div className="ml-[7px] flex h-[25px] flex-1 items-center bg-[#0a96d9] pl-[4px] font-bold text-white">
                  <SketchSmall on />
                  <span className="ml-[18px] pt-[2px] tracking-[0.1px]">Sketch2</span>
                </div>
              </div>
            </div>
          </div>
          <PanelBar title="COMMENTS" plus />
        </aside>
        <div className="relative ml-[411px] flex items-end pb-[4px]">
          <NavBar />
        </div>
        <div className="relative ml-auto flex items-end pb-[8px] pr-[23px] font-bold text-[#3a3a3a]">
          <span className="tracking-[0.15px]">Sketch2</span>
        </div>
      </main>

      <footer className="flex h-[63px] shrink-0 border-t-[3px] border-[#d3d3d3] bg-[#f1f1f1]">
        <div className="flex h-[60px] w-[176px] items-center gap-[11px] pl-[12px]">
          {playback.map((d) => (
            <svg key={d} width="20" height="20" viewBox="0 0 20 20">
              <path d={d} fill="#4a4a4a" stroke="#4a4a4a" strokeWidth="1.800" />
            </svg>
          ))}
        </div>
        <div className="relative flex h-[60px] w-[230px] pl-[1px] pt-[14px]">
          <svg className="absolute left-[16px] top-[43px]" width="184" height="9" viewBox="0 0 184 9">
            <path d="M1.500 0v6.500h180V0M31 0v6M61 0v6M91 0v6M121 0v6M151 0v6" fill="none" stroke="#cbcbcb" strokeWidth="2.500" />
          </svg>
          {timeline.map((icon, i) => (
            <div
              key={i}
              className={
                "relative flex h-[30px] w-[30px] items-center justify-center rounded-[2px] " + (i === 3 ? "bg-[#0a96d9]" : "")
              }
            >
              {icon}
            </div>
          ))}
          <svg className="absolute left-[204px] top-[11px]" width="15" height="41" viewBox="0 0 15 41">
            <path d="M0 0h15v4.500L9 11v30H6V11L0 4.500z" fill="#666" />
          </svg>
        </div>
        <div className="ml-auto flex h-[60px] items-center pr-[16px]">
          <Gear color="#8f8f8f" />
        </div>
      </footer>
    </div>
  );
}
